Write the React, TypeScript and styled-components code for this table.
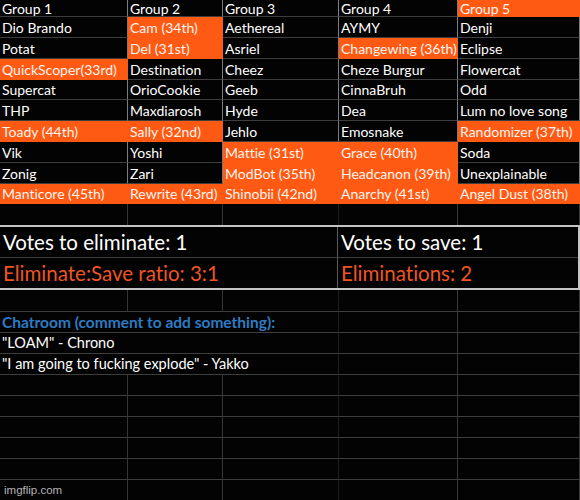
import styled, { createGlobalStyle } from 'styled-components'

const GlobalStyle = createGlobalStyle`
    html, body {
        margin: 0;
        padding: 0;
        background: #000;
    }
    body {
        font-family: Lato, "Open Sans", sans-serif;
        font-variant-ligatures: none;
    }
`

const ORANGE = '#ff5a14'

const Page = styled.div`
    position: relative;
    width: 580px;
    height: 500px;
    overflow: hidden;
    background: #030303;
`

const Sheet = styled.div`
    display: grid;
    grid-template-columns: 128px 95px 116px 119px 122px;
    grid-template-rows: 17px 21px 21px 21px 20px 21px 21px 21px 21px 20px 22px 64px 22px repeat(9, 21px);
`

const Cell = styled.div<{ $hl?: boolean; $line?: string }>`
    box-sizing: border-box;
    display: flex;
    align-items: center;
    padding: 1px 2px 0;
    white-space: nowrap;
    overflow: visible;
    font-size: 14px;
    line-height: 1;
    color: ${p => (p.$hl ? '#fff4ee' : '#fff')};
    background: ${p => (p.$hl ? ORANGE : 'transparent')};
    border-right: 1px solid ${p => (p.$hl ? ORANGE : p.$line ?? '#7c7c7c')};
    border-bottom: 1px solid ${p => (p.$hl ? ORANGE : '#3e3e3e')};
`

const VoteBox = styled.div`
    grid-column: 1 / -1;
    display: grid;
    grid-template-columns: 338px 1fr;
    grid-template-rows: 1fr 1fr;
    box-sizing: border-box;
    width: 580px;
    border-top: 2px solid #c4c4c4;
    border-bottom: 2px solid #c4c4c4;
    border-right: 2px solid #c4c4c4;
    margin-top: -1px;
`

const VoteCell = styled.div<{ $tone?: 'white' | 'orange' }>`
    display: flex;
    align-items: center;
    padding: 0 3px;
    font-size: 20.5px;
    color: ${p => (p.$tone === 'orange' ? '#ee5523' : '#fff')};
    border-bottom: 1px solid #3e3e3e;
    &:nth-child(odd) {
        border-right: 1px solid #5a5a5a;
    }
    &:nth-child(n + 3) {
        border-bottom: none;
    }
`

const ChatCell = styled(Cell)<{ $title?: boolean }>`
    grid-column: span 3;
    border-right-color: #222;
    font-size: ${p => (p.$title ? '15.5px' : '14.5px')};
    font-weight: ${p => (p.$title ? 700 : 400)};
    color: ${p => (p.$title ? '#2e7bc4' : '#fff')};
`

const Watermark = styled.div`
    position: absolute;
    left: 4px;
    bottom: 4px;
    font-family: "Liberation Sans", Arial, sans-serif;
    font-size: 11.5px;
    color: #b4b4b4;
`

const headers = ['Group 1', 'Group 2', 'Group 3', 'Group 4', 'Group 5']

// '*' marks an eliminated contestant (orange fill)
const rows = [
    ['Dio Brando', 'Cam (34th)*', 'Aethereal', 'AYMY', 'Denji'],
    ['Potat', 'Del (31st)*', 'Asriel', 'Changewing (36th)*', 'Eclipse'],
    ['QuickScoper(33rd)*', 'Destination', 'Cheez', 'Cheze Burgur', 'Flowercat'],
    ['Supercat', 'OrioCookie', 'Geeb', 'CinnaBruh', 'Odd'],
    ['THP', 'Maxdiarosh', 'Hyde', 'Dea', 'Lum no love song'],
    ['Toady (44th)*', 'Sally (32nd)*', 'Jehlo', 'Emosnake', 'Randomizer (37th)*'],
    ['Vik', 'Yoshi', 'Mattie (31st)*', 'Grace (40th)*', 'Soda'],
    ['Zonig', 'Zari', 'ModBot (35th)*', 'Headcanon (39th)*', 'Unexplainable'],
    ['Manticore (45th)*', 'Rewrite (43rd)*', 'Shinobii (42nd)*', 'Anarchy (41st)*', 'Angel Dust (38th)*'],
]

const chat = [
    'Chatroom (comment to add something):',
    '"LOAM" - Chrono',
    '"I am going to fucking explode" - Yakko',
]

const lowerLines = ['#353535', '#353535', '#1e1e1e', '#3a3a3a', '#3a3a3a']

const EmptyRow = ({ lines }: { lines: string[] }) => (
    <>
        {lines.map((c, i) => <Cell key={i} $line={c} />)}
    </>
)

export default function App() {
    return <Page>
        <GlobalStyle />
        <Sheet>
            {headers.map((h, i) => <Cell key={h} $hl={i === 4}>{h}</Cell>)}
            {rows.map((row, r) => row.map((v, c) => {
                const hl = v.endsWith('*')
                return <Cell key={`${r}-${c}`} $hl={hl}>{hl ? v.slice(0, -1) : v}</Cell>
            }))}
            <EmptyRow lines={lowerLines} />
            <VoteBox>
                <VoteCell>Votes to eliminate: 1</VoteCell>
                <VoteCell>Votes to save: 1</VoteCell>
                <VoteCell $tone="orange">Eliminate:Save ratio: 3:1</VoteCell>
                <VoteCell $tone="orange">Eliminations: 2</VoteCell>
            </VoteBox>
            <EmptyRow lines={lowerLines} />
            {chat.map((t, i) => <>
                <ChatCell key={`c${i}`} $title={i === 0}>{t}</ChatCell>
                <Cell key={`d${i}`} $line="#3a3a3a" />
                <Cell key={`e${i}`} $line="#3a3a3a" />
            </>)}
            {Array.from({ length: 6 }).map((_, i) => <EmptyRow key={i} lines={lowerLines} />)}
        </Sheet>
        <Watermark>imgflip.com</Watermark>
    </Page>
}
